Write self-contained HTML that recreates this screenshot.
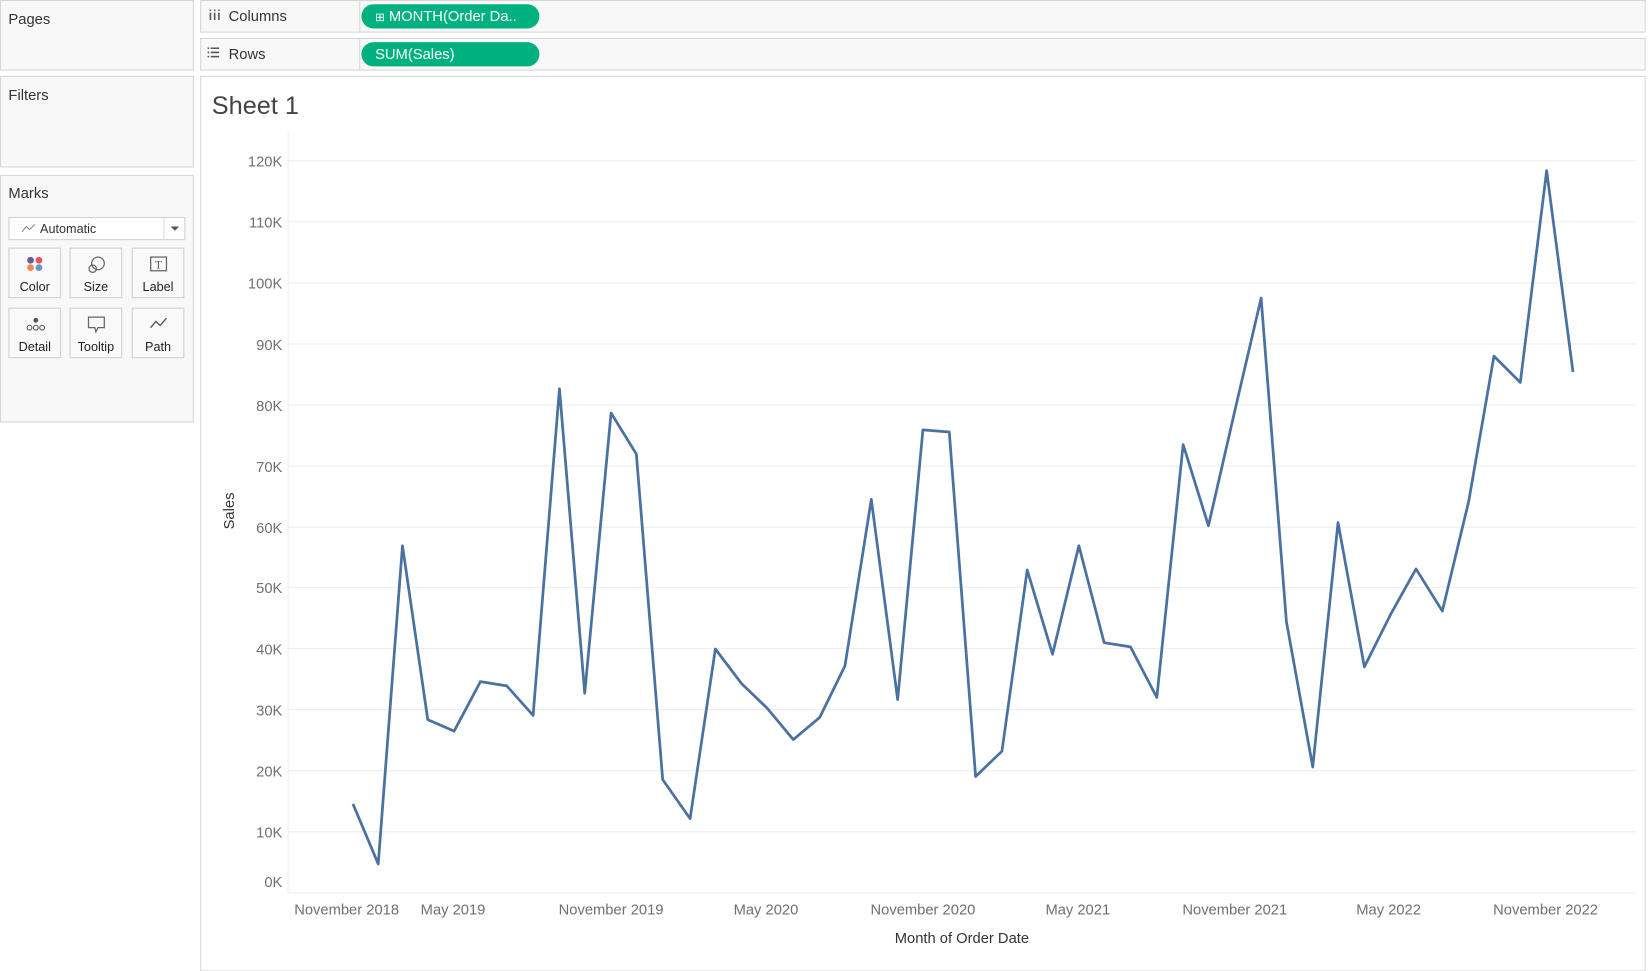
<!DOCTYPE html>
<html><head><style>
html,body{margin:0;padding:0;width:1652px;height:965px;overflow:hidden;background:#fff;font-family:"Liberation Sans",sans-serif}
#w{position:absolute;left:0;top:0;width:1568px;height:916px;transform:scale(1.05357);transform-origin:0 0}
.p{position:absolute;background:#f8f8f8;border:1px solid #d6d6d6;box-sizing:border-box}
.t{position:absolute;font-size:14px;color:#333}
.pill{position:absolute;background:#00b180;color:#fff;border-radius:12px;font-size:14px;height:23px;line-height:23px}
.btn{position:absolute;width:50px;height:48px;border:1px solid #cfcfcf;background:#f9f9f9;box-sizing:border-box;font-size:12px;color:#222;text-align:center}
.btn span{position:absolute;bottom:3px;left:0;right:0}
.btn svg{position:absolute;left:15px;top:6px}
</style></head><body><div id="w">
<div class="p" style="left:0;top:0;width:184px;height:67px"></div><div class="t" style="left:8px;top:10px">Pages</div>
<div class="p" style="left:0;top:72px;width:184px;height:87px"></div><div class="t" style="left:8px;top:82px">Filters</div>
<div class="p" style="left:0;top:166px;width:184px;height:235px"></div><div class="t" style="left:8px;top:175px">Marks</div>
<div style="position:absolute;left:8px;top:206px;width:168px;height:22px;border:1px solid #cfcfcf;background:#fff;box-sizing:border-box;font-size:12px;color:#333;line-height:20px">
<svg style="position:absolute;left:11px;top:5px" width="14" height="10"><path d="M1 8L5 3L8 6L13 1" fill="none" stroke="#888" stroke-width="1"/></svg><span style="position:absolute;left:29px">Automatic</span>
<span style="position:absolute;left:146px;top:0;bottom:0;border-left:1px solid #ddd;width:21px"></span><span style="position:absolute;left:153px;top:8px;border:4px solid transparent;border-top:4px solid #555;width:0;height:0"></span></div>
<div class="btn" style="left:8px;top:235px"><svg width="20" height="20"><circle cx="5" cy="5" r="3.2" fill="#6a5a8e"/><circle cx="13" cy="5" r="3.2" fill="#e8516a"/><circle cx="5" cy="12" r="3.2" fill="#f08a55"/><circle cx="13" cy="12" r="3.2" fill="#6f93c4"/></svg><span>Color</span></div>
<div class="btn" style="left:66px;top:235px"><svg width="20" height="20"><circle cx="11" cy="8" r="6" fill="none" stroke="#666" stroke-width="1.2"/><circle cx="6" cy="13" r="3.5" fill="none" stroke="#666" stroke-width="1.2"/></svg><span>Size</span></div>
<div class="btn" style="left:125px;top:235px"><svg width="20" height="20"><rect x="2" y="2" width="15" height="13" fill="none" stroke="#666" stroke-width="1.2"/><text x="6" y="13" font-size="11" font-family="Liberation Serif" fill="#555">T</text></svg><span>Label</span></div>
<div class="btn" style="left:8px;top:292px"><svg width="20" height="20"><circle cx="10" cy="5" r="2.3" fill="#555"/><circle cx="4" cy="12" r="2.3" fill="none" stroke="#555"/><circle cx="10" cy="12" r="2.3" fill="none" stroke="#555"/><circle cx="16" cy="12" r="2.3" fill="none" stroke="#555"/></svg><span>Detail</span></div>
<div class="btn" style="left:66px;top:292px"><svg width="20" height="20"><path d="M2 2H17V12H11L9 16L8 12H2Z" fill="none" stroke="#666" stroke-width="1.2"/></svg><span>Tooltip</span></div>
<div class="btn" style="left:125px;top:292px"><svg width="20" height="20"><path d="M2 12L7 6L11 10L17 3" fill="none" stroke="#555" stroke-width="1.3"/></svg><span>Path</span></div>

<div class="p" style="left:190px;top:0;width:1372px;height:31px"></div>
<div style="position:absolute;left:341px;top:0;width:1px;height:31px;background:#d6d6d6"></div>
<svg style="position:absolute;left:198px;top:9px" width="12" height="12"><rect x="1" y="0" width="1.5" height="1.5" fill="#555"/><rect x="5" y="0" width="1.5" height="1.5" fill="#555"/><rect x="9" y="0" width="1.5" height="1.5" fill="#555"/><rect x="1" y="3" width="1.5" height="7" fill="#555"/><rect x="5" y="3" width="1.5" height="7" fill="#555"/><rect x="9" y="3" width="1.5" height="7" fill="#555"/></svg>
<div class="t" style="left:217px;top:7px">Columns</div>
<div class="pill" style="left:343px;top:4px;width:169px"><span style="margin-left:13px;font-size:11px">⊞</span> MONTH(Order Da..</div>
<div class="p" style="left:190px;top:36px;width:1372px;height:31px"></div>
<div style="position:absolute;left:341px;top:36px;width:1px;height:31px;background:#d6d6d6"></div>
<svg style="position:absolute;left:197px;top:45px" width="12" height="10"><rect x="0" y="0" width="1.5" height="1.5" fill="#555"/><rect x="0" y="4" width="1.5" height="1.5" fill="#555"/><rect x="0" y="8" width="1.5" height="1.5" fill="#555"/><rect x="3" y="0" width="8" height="1.5" fill="#555"/><rect x="3" y="4" width="8" height="1.5" fill="#555"/><rect x="3" y="8" width="8" height="1.5" fill="#555"/></svg>
<div class="t" style="left:217px;top:43px">Rows</div>
<div class="pill" style="left:343px;top:40px;width:169px"><span style="margin-left:13px">SUM(Sales)</span></div>

<div style="position:absolute;left:190px;top:72px;width:1372px;height:850px;border:1px solid #d6d6d6;box-sizing:border-box;background:#fff"></div>
<div style="position:absolute;left:201px;top:87px;font-size:24px;color:#444">Sheet 1</div>
<svg style="position:absolute;left:0;top:0" width="1568" height="916" font-family="Liberation Sans" font-size="14">
<g stroke="#eeeeee" stroke-width="1">
<line x1="273" x2="1553" y1="152.5" y2="152.5"/><line x1="273" x2="1553" y1="210.5" y2="210.5"/><line x1="273" x2="1553" y1="268.5" y2="268.5"/><line x1="273" x2="1553" y1="326.5" y2="326.5"/><line x1="273" x2="1553" y1="384.5" y2="384.5"/><line x1="273" x2="1553" y1="442.5" y2="442.5"/><line x1="273" x2="1553" y1="500.5" y2="500.5"/><line x1="273" x2="1553" y1="557.5" y2="557.5"/><line x1="273" x2="1553" y1="615.5" y2="615.5"/><line x1="273" x2="1553" y1="673.5" y2="673.5"/><line x1="273" x2="1553" y1="731.5" y2="731.5"/><line x1="273" x2="1553" y1="789.5" y2="789.5"/><line x1="273" x2="1553" y1="847.5" y2="847.5"/>
<line x1="273.5" x2="273.5" y1="125" y2="847"/></g>
<g fill="#707070" text-anchor="end"><text x="268" y="158">120K</text><text x="268" y="216">110K</text><text x="268" y="274">100K</text><text x="268" y="332">90K</text><text x="268" y="390">80K</text><text x="268" y="448">70K</text><text x="268" y="506">60K</text><text x="268" y="563">50K</text><text x="268" y="621">40K</text><text x="268" y="679">30K</text><text x="268" y="737">20K</text><text x="268" y="795">10K</text><text x="268" y="842">0K</text></g>
<g fill="#707070" text-anchor="middle"><text x="329" y="868">November 2018</text><text x="430" y="868">May 2019</text><text x="580" y="868">November 2019</text><text x="727" y="868">May 2020</text><text x="876" y="868">November 2020</text><text x="1023" y="868">May 2021</text><text x="1172" y="868">November 2021</text><text x="1318" y="868">May 2022</text><text x="1467" y="868">November 2022</text></g>
<text x="913" y="895" text-anchor="middle" fill="#333">Month of Order Date</text>
<text transform="translate(222,485) rotate(-90)" text-anchor="middle" fill="#333">Sales</text>
<polyline fill="none" stroke="#4a71a0" stroke-width="2.6" stroke-linejoin="round" points="335,763 359,820 382,518 406,683 431,694 456,647 481,651 506,679 531,369 555,658 580,392 604,431 629,740 655,777 679,616 704,649 728,672 753,702 778,681 802,632 827,474 852,664 876,408 901,410 926,737 951,713 975,541 999,621 1024,518 1048,610 1073,614 1098,662 1123,422 1147,499 1172,390 1197,283 1221,590 1246,728 1270,496 1295,633 1320,583 1344,540 1369,580 1394,476 1418,338 1443,363 1468,162 1493,353"/>
</svg>
</div></body></html>
